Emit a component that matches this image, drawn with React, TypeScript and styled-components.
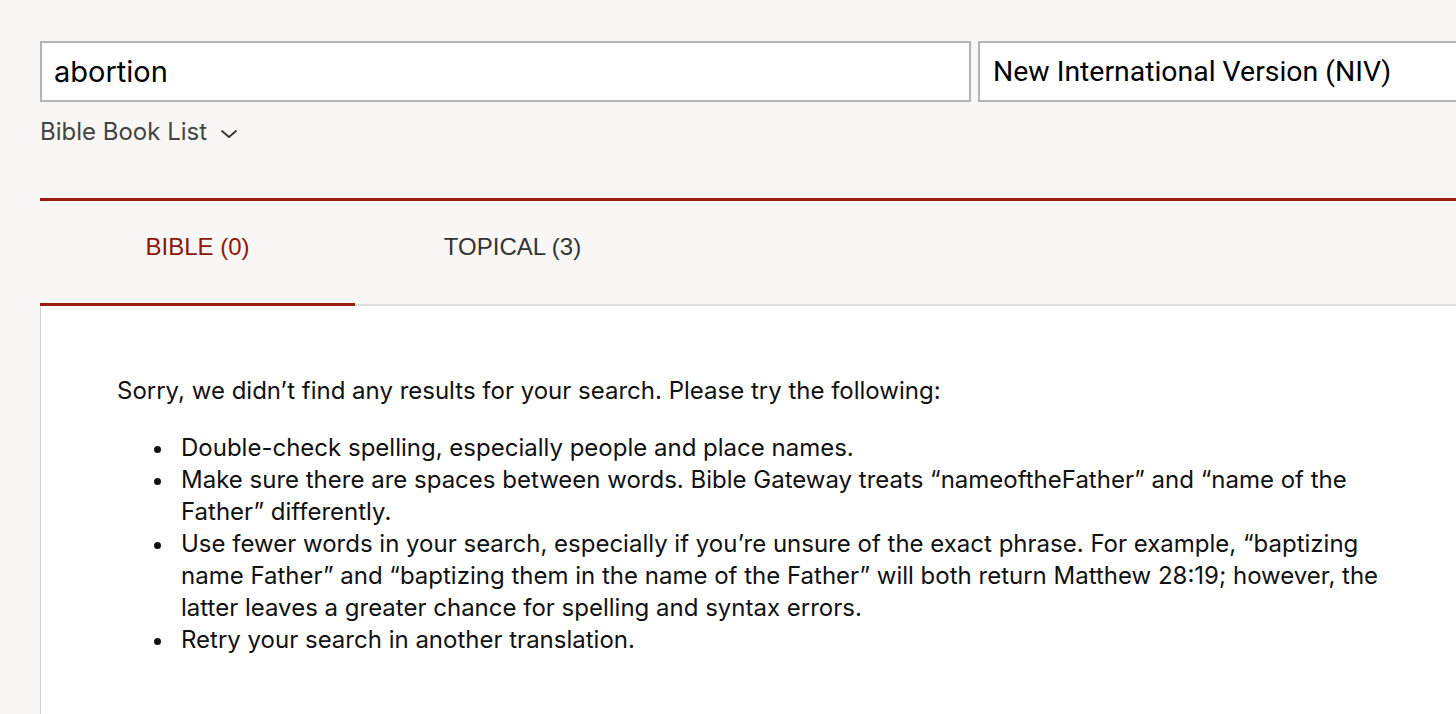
import styled, { createGlobalStyle } from "styled-components";

const GlobalStyle = createGlobalStyle`
  html, body {
    margin: 0;
    padding: 0;
    background-color: #f8f7f5;
    overflow: hidden;
  }
  body {
    font-family: "Inter", "Noto Sans", sans-serif;
    color: #111111;
  }
`;

const suggestions = [
  "Double-check spelling, especially people and place names.",
  "Make sure there are spaces between words. Bible Gateway treats \u201cnameoftheFather\u201d and \u201cname of the Father\u201d differently.",
  "Use fewer words in your search, especially if you\u2019re unsure of the exact phrase. For example, \u201cbaptizing name Father\u201d and \u201cbaptizing them in the name of the Father\u201d will both return Matthew 28:19; however, the latter leaves a greater chance for spelling and syntax errors.",
  "Retry your search in another translation.",
];

export default function App() {
  return (
    <Page>
      <GlobalStyle />
      <SearchRow>
        <SearchInput type="text" defaultValue="abortion" />
        <VersionSelect>New International Version (NIV)</VersionSelect>
      </SearchRow>
      <BookList>
        Bible Book List
        <svg width="18" height="10" viewBox="0 0 18 10" fill="none">
          <path d="M2 2l7 6 7-6" stroke="#333" strokeWidth="1.8" strokeLinecap="round" strokeLinejoin="round" />
        </svg>
      </BookList>
      <Results>
        <Tabs>
          <Tab active>BIBLE (0)</Tab>
          <Tab>TOPICAL (3)</Tab>
          <TabFiller />
        </Tabs>
        <Panel>
          <Message>Sorry, we didn’t find any results for your search. Please try the following:</Message>
          <Tips>
            {suggestions.map((tip) => (
              <Tip key={tip}>{tip}</Tip>
            ))}
          </Tips>
        </Panel>
      </Results>
    </Page>
  );
}

const Page = styled.div`
  width: 1456px;
  height: 714px;
  overflow: hidden;
  padding: 41px 0 0 40px;
  box-sizing: border-box;
`;

const SearchRow = styled.div`
  display: flex;
  gap: 7px;
`;

const SearchInput = styled.input`
  flex-shrink: 0;
  width: 931px;
  height: 61px;
  box-sizing: border-box;
  border: 2px solid #b3b3b3;
  background-color: #ffffff;
  padding: 0 12px;
  font-family: "Inter", sans-serif;
  font-size: 29px;
  color: #000000;
  outline: none;
`;

const VersionSelect = styled.div`
  flex-shrink: 0;
  width: 560px;
  height: 61px;
  box-sizing: border-box;
  border: 2px solid #b3b3b3;
  background-color: #ffffff;
  padding: 0 13px;
  display: flex;
  align-items: center;
  font-family: "Roboto", sans-serif;
  font-size: 28.4px;
  color: #000000;
`;

const BookList = styled.div`
  display: flex;
  align-items: center;
  gap: 13px;
  margin-top: 14px;
  height: 30px;
  font-size: 24px;
  color: #444444;
  svg {
    margin-top: 5px;
  }
`;

const Results = styled.div`
  margin-top: 52px;
  border-top: 3px solid #9a1b0f;
`;

const Tabs = styled.div`
  display: flex;
  height: 105px;
`;

type TabProps = { active?: boolean };

const Tab = styled.div<TabProps>`
  width: 315px;
  display: flex;
  align-items: center;
  justify-content: center;
  box-sizing: border-box;
  border-bottom: ${(p) => (p.active ? "3px solid #9a1b0f" : "2px solid #dddddd")};
  padding-bottom: ${(p) => (p.active ? "10px" : "11px")};
  font-family: "Liberation Sans", Arial, sans-serif;
  font-size: 24px;
  color: ${(p) => (p.active ? "#8e1609" : "#333333")};
`;

const TabFiller = styled.div`
  flex: 1;
  border-bottom: 2px solid #dddddd;
`;

const Panel = styled.div`
  background-color: #ffffff;
  border-left: 1px solid #d4d4d4;
  padding: 69px 51px 60px 76px;
  height: 420px;
`;

const Message = styled.p`
  margin: 0 0 25px;
  font-size: 24px;
  line-height: 32px;
`;

const Tips = styled.ul`
  margin: 0;
  padding-left: 64px;
  list-style: none;
  font-size: 24px;
  line-height: 32px;
`;

const Tip = styled.li`
  position: relative;
  &::before {
    content: "";
    position: absolute;
    left: -27px;
    top: 14px;
    width: 7px;
    height: 7px;
    border-radius: 50%;
    background-color: #111111;
  }
`;
